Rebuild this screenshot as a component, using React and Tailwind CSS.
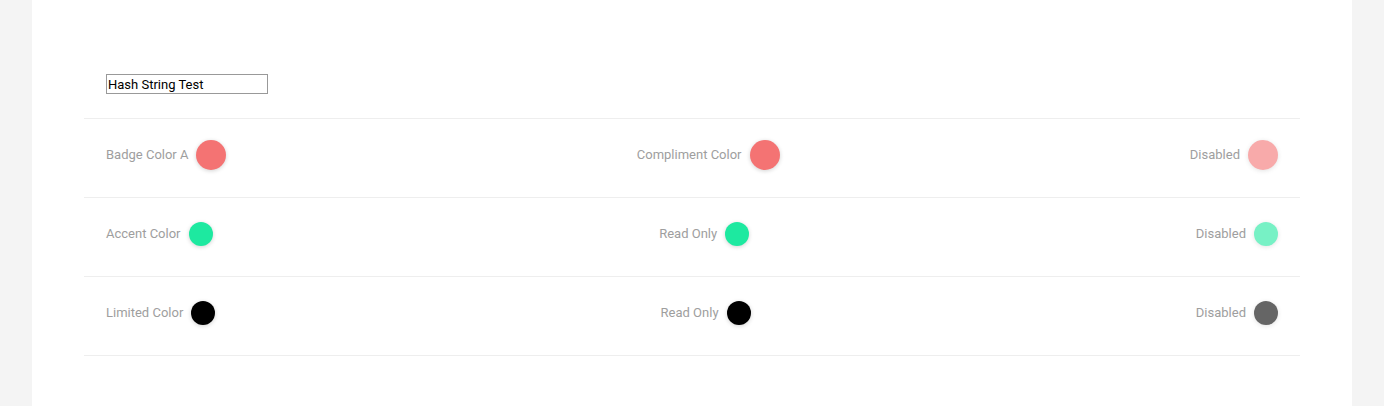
import React from 'react'

const rows = [
  { label: 'Badge Color A', mid: 'Compliment Color', color: 'bg-[#f47373]', size: 'w-[30px] h-[30px]' },
  { label: 'Accent Color', mid: 'Read Only', color: 'bg-[#1de9a0]', size: 'w-6 h-6' },
  { label: 'Limited Color', mid: 'Read Only', color: 'bg-black', size: 'w-6 h-6' },
]

const Dot = ({ color, size, disabled }) => (
  <span className={`${size} ${color} ${disabled ? 'opacity-60' : ''} rounded-full shadow-[0_1px_4px_rgba(0,0,0,0.18)] inline-block`} />
)

const Swatch = ({ label, ...dot }) => (
  <div className="flex items-center gap-2">
    <span className="text-[13px] text-[#9e9e9e]">{label}</span>
    <Dot {...dot} />
  </div>
)

export default function App() {
  return (
    <div className="min-h-[406px] bg-[#f4f4f4] px-8 font-['Roboto',sans-serif]">
      <div className="bg-white min-h-[406px] px-[52px]">
        <div className="pt-[74px] pb-6 px-[22px]">
          <input
            defaultValue="Hash String Test"
            className="block w-[162px] h-5 border border-[#999] px-[1px] text-[13px] text-black outline-none"
          />
        </div>
        <div className="border-b border-[#eeeeee]">
          {rows.map((r) => (
            <div key={r.label} className="h-[79px] border-t border-[#eeeeee] px-[22px] pb-[6px] flex items-center justify-between">
              <Swatch label={r.label} color={r.color} size={r.size} />
              <Swatch label={r.mid} color={r.color} size={r.size} />
              <Swatch label="Disabled" color={r.color} size={r.size} disabled />
            </div>
          ))}
        </div>
      </div>
    </div>
  )
}
